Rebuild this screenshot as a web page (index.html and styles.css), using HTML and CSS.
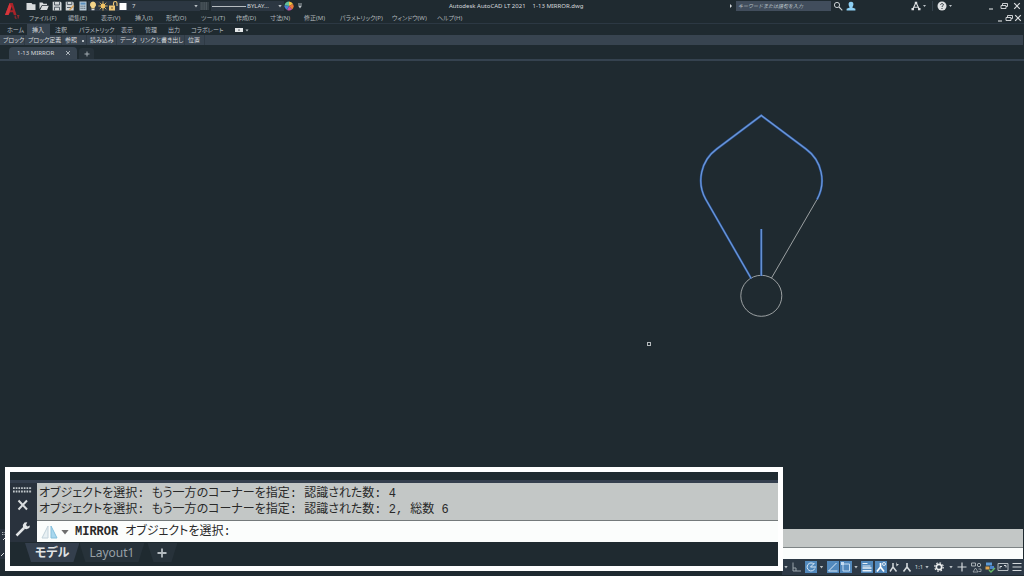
FILE: index.html
```html
<!DOCTYPE html>
<html lang="ja">
<head>
<meta charset="utf-8">
<title>Autodesk AutoCAD LT 2021 - 1-13 MIRROR.dwg</title>
<link rel="stylesheet" href="styles.css">
</head>
<body>
<div class="app">
  <header class="top">
    <button class="logo" aria-label="アプリケーション メニュー">
      <svg viewBox="0 0 16 19" width="16" height="19"><path d="M1 14 5.600 2h3.200L12.500 14H9.800l-.8-2.800H6.200L4.500 14z" fill="#a82329"/><path d="M1 14 5.600 2 7.300 6 4.500 14z" fill="#d5363b"/><path d="M6.600 9.200h2.200L7.600 5.600z" fill="#1f2a30"/><path d="M11.200 14.500v2.700h1.500M13 14.700h2.400M14.200 14.700v2.800" stroke="#c1272d" fill="none" stroke-width=".8"/></svg>
    </button>
    <div class="bars">
      <div class="titlebar">
        <div class="quick">
          <button aria-label="新規作成"><svg viewBox="0 0 10 10"><path d="M.5 2h5l1 1.200h3V9h-9z" fill="#d9dcde"/></svg></button>
          <button aria-label="開く"><svg viewBox="0 0 10 10"><path d="M.5 1.500h3l1 1.200h3.500V4H3L.5 8z" fill="#d9dcde"/><path d="M3.200 4.700h6.600L8 9H1.200z" fill="#d9dcde"/></svg></button>
          <button aria-label="上書き保存"><svg viewBox="0 0 10 10"><path d="M.7.700h7.800l1 1v7.800H.7z" fill="#d2d6d8"/><path d="M2.500 1v3h5V1M2.500 9.500V6.200h5v3.300" fill="none" stroke="#46515a" stroke-width=".9"/></svg></button>
          <button aria-label="名前を付けて保存"><svg viewBox="0 0 10 10"><path d="M.7.700h7l1 1v7.800h-8z" fill="#d2d6d8"/><path d="M2.300 1v2.600h4.500V1M2 6.500h4" fill="none" stroke="#46515a" stroke-width=".9"/><path d="m4.500 9 4.300-4.500" stroke="#d6a45e" stroke-width="1.700"/></svg></button>
          <button aria-label="印刷"><svg viewBox="0 0 10 10"><path d="M1.500.5h7v9h-7z" fill="#b8c9d6"/><path d="M2.500 1.600h5v2h-5z" fill="#5b8fbd"/><path d="M2.500 5.200h5M2.500 7.300h5" stroke="#55636e" stroke-dasharray="1.200 .6"/></svg></button>
        </div>
        <div class="layer">
          <svg viewBox="0 0 10 10"><path d="M5 .5a3.200 3.200 0 0 0-1.700 5.800v1.200h3.400V6.300A3.200 3.200 0 0 0 5 .5z" fill="#f4d488"/><path d="M3.500 8.600h3" stroke="#d9dcde" stroke-width="1.300"/></svg>
          <svg viewBox="0 0 10 10"><circle cx="5" cy="5" r="2.400" fill="#f1c364"/><path d="M5 .3v9.400M.3 5h9.400M1.700 1.700l6.600 6.600M8.300 1.700 1.700 8.300" stroke="#f1c364" stroke-width=".8"/></svg>
          <svg viewBox="0 0 10 10"><path d="M1 4.500h6v5H1z" fill="#efc774"/><path d="M5.500 4.500V2.300a1.700 1.700 0 0 1 3.500 0V5" fill="none" stroke="#efc774" stroke-width="1.100"/><path d="M4 6v2" stroke="#6b5732"/></svg>
          <svg viewBox="0 0 10 10"><path d="M1.500 2h7v7h-7z" fill="#fff"/></svg>
          <span class="layer-name">7</span>
          <i class="caret"></i>
        </div>
        <svg class="grid-icon" viewBox="0 0 9 8"><path d="M.5 1h8M.5 3h8M.5 5h8M.5 7h8" stroke="#8b959c" stroke-dasharray="1.200 .7"/></svg>
        <div class="linetype"><hr class="sample"><span>BYLAY...</span><i class="caret"></i></div>
        <svg class="wheel" viewBox="0 0 10 10"><path d="M5 5V.5A4.500 4.500 0 0 1 9 3z" fill="#efc143"/><path d="m5 5 4-2a4.500 4.500 0 0 1-1 5.500z" fill="#e9783b"/><path d="m5 5 3 3.500a4.500 4.500 0 0 1-5 .5z" fill="#c451a1"/><path d="m5 5-2 4a4.500 4.500 0 0 1-2.400-5z" fill="#477fd1"/><path d="M5 5 .6 4A4.500 4.500 0 0 1 5 .5z" fill="#62c09b"/></svg>
        <svg class="more" viewBox="0 0 4 6" width="4" height="6"><path d="M0 1h4" stroke="#b9c0c4" stroke-width=".9"/><path d="M0 2.500h4l-2 3z" fill="#b9c0c4"/></svg>
        <h1 class="title"><span>Autodesk AutoCAD LT 2021</span><span>1-13 MIRROR.dwg</span></h1>
        <i class="arrow"></i>
        <input class="search" type="text" aria-label="検索" placeholder="キーワードまたは語句を入力">
        <button class="ico" aria-label="検索を実行"><svg viewBox="0 0 10 10"><circle cx="4" cy="4" r="2.600" fill="none" stroke="#c9ced1"/><path d="m6 6 3.300 3.300" stroke="#c9ced1" stroke-width="1.200"/></svg></button>
        <button class="ico user" aria-label="サインイン"><svg viewBox="0 0 10 10"><path d="M5 .7c1.800 0 2.600 1.200 2.400 2.800C7.300 5 6.600 6 6.200 6.400l3.200 1.400v1.700H.6V7.800l3.200-1.400C3.400 6 2.700 5 2.600 3.500 2.400 1.900 3.200.7 5 .7z" fill="#8ed0f4"/></svg></button>
        <button class="ico" aria-label="アプリ ストア"><svg viewBox="0 0 10 10"><path d="M5 1.500 1.800 8M5 1.500 8.200 8M2.500 6.200h5" stroke="#dde0e2" stroke-width="1.100" fill="none"/><path d="M3.800.7h2.400V3H3.800zM.5 7h2.500v2.200H.5zM7 7h2.500v2.200H7z" fill="#dde0e2"/></svg></button>
        <i class="caret small"></i>
        <i class="rule"></i>
        <button class="ico" aria-label="ヘルプ"><svg viewBox="0 0 10 10"><circle cx="5" cy="5" r="4.500" fill="#dde0e2"/><path d="M3.600 3.800c.2-1.700 2.900-1.600 2.800 0C6.400 4.800 5 4.700 5 6M5 7v1" fill="none" stroke="#2a343b"/></svg></button>
        <i class="caret small"></i>
        <div class="win">
          <button aria-label="最小化"><svg viewBox="0 0 8 8"><path d="M2 7h4" stroke="#dde0e2" stroke-width="1.100"/></svg></button>
          <button aria-label="元に戻す"><svg viewBox="0 0 8 8"><path d="M1 3.500h5v3H1zM2.500 3.500v-2H7.500v3H6" fill="none" stroke="#dde0e2" stroke-width=".9"/></svg></button>
          <button aria-label="閉じる"><svg viewBox="0 0 8 8"><path d="m1.200 1.200 5.600 5.600M6.800 1.200 1.200 6.800" stroke="#dde0e2" stroke-width="1.200"/></svg></button>
        </div>
      </div>
      <div class="menubar">
        <nav class="menus">
          <button>ファイル(F)</button><button>編集(E)</button><button>表示(V)</button><button>挿入(I)</button><button>形式(O)</button><button>ツール(T)</button><button>作成(D)</button><button>寸法(N)</button><button>修正(M)</button><button>パラメトリック(P)</button><button>ウィンドウ(W)</button><button>ヘルプ(H)</button>
        </nav>
        <div class="win doc">
          <button aria-label="図面を最小化"><svg viewBox="0 0 8 8"><path d="M2 7h4" stroke="#dde0e2" stroke-width="1.100"/></svg></button>
          <button aria-label="図面を元に戻す"><svg viewBox="0 0 8 8"><path d="M1 3.500h5v3H1zM2.500 3.500v-2H7.500v3H6" fill="none" stroke="#dde0e2" stroke-width=".9"/></svg></button>
          <button aria-label="図面を閉じる"><svg viewBox="0 0 8 8"><path d="m1.200 1.200 5.600 5.600M6.800 1.200 1.200 6.800" stroke="#dde0e2" stroke-width="1.200"/></svg></button>
        </div>
      </div>
    </div>
  </header>
  <nav class="ribbon">
    <button>ホーム</button><button class="on">挿入</button><button>注釈</button><button>パラメトリック</button><button>表示</button><button>管理</button><button>出力</button><button>コラボレート</button>
    <button aria-label="リボン表示の切り替え"><svg viewBox="0 0 14 6" width="14" height="6"><path d="M0 1h8v4H0z" fill="#e4e7e8"/><path d="M3 3.500h2L4 2z" fill="#333d44"/><path d="M10.500 2.500h3L12 4.500z" fill="#b6bcc0"/></svg></button>
  </nav>
  <div class="panels">
    <button>ブロック</button><button>ブロック定義</button><button>参照<i class="tick"></i></button><button>読み込み</button><button>データ</button><button>リンクと書き出し</button><button>位置</button>
  </div>
  <div class="files">
    <div class="file"><span>1-13 MIRROR</span><button aria-label="タブを閉じる"><svg viewBox="0 0 6 6" width="6" height="6"><path d="m1 1 4 4M5 1 1 5" stroke="#b9c0c5" stroke-width=".9"/></svg></button></div>
    <button class="add" aria-label="新しい図面"><svg viewBox="0 0 6 6" width="6" height="6"><path d="M3 .5v5M.5 3h5" stroke="#a5adb3"/></svg></button>
  </div>
  <main class="canvas">
    <svg class="shape" viewBox="690 105 140 220" width="140" height="220" role="img" aria-label="図面">
      <g fill="none" stroke="#a9aeaf" stroke-width=".9"><path d="M817 199.500 771.500 278"/><circle cx="761.300" cy="295.800" r="20.500"/></g>
      <g fill="none" stroke="#2f5da6" stroke-width="2.200"><path d="M751.200 278.500 705.700 199.300A39 39 0 0 1 716.700 149L761.300 115.500 806 149A39 39 0 0 1 817 199.500M761.300 229v47"/></g>
      <g fill="none" stroke="#7099d8" stroke-width="1.100"><path d="M751.200 278.500 705.700 199.300A39 39 0 0 1 716.700 149L761.300 115.500 806 149A39 39 0 0 1 817 199.500M761.300 229v47"/></g>
    </svg>
    <i class="pick"></i>
  </main>
  <div class="cmd-back">
    <svg viewBox="0 0 5 30" width="5" height="30"><path d="M2 3.500h3M2 5.500h3" stroke="#aab1b5" stroke-dasharray="1 .6"/><path d="m3 11 2-2M1 27l3-3" stroke="#dde0e2"/></svg>
    <div class="back-log"></div><div class="back-line"></div>
  </div>
  <footer class="status">
    <div class="tools">
      <i class="caret"></i>
      <button aria-label="直交モード"><svg viewBox="0 0 12 12"><path d="M2 1.500V10h8M2 7h3v3" fill="none" stroke="#9aa4ab"/></svg></button>
      <button class="on" aria-label="極トラッキング"><svg viewBox="0 0 12 12"><path d="M9 3.200A4 4 0 1 0 9.800 7.500M5.500 6H11M5.500 6l4-4" fill="none" stroke="#d7e7f6"/></svg></button>
      <i class="caret"></i>
      <button class="on" aria-label="オブジェクト スナップ トラッキング"><svg viewBox="0 0 12 12"><path d="M1.500 10h9M1.500 10l8-8" fill="none" stroke="#d7e7f6"/></svg></button>
      <button class="on" aria-label="オブジェクト スナップ"><svg viewBox="0 0 12 12"><path d="M3 3h6.500v7H3z" fill="none" stroke="#c3dbf1"/><path d="M1 1h3v3H1z" fill="#c3dbf1"/></svg></button>
      <i class="caret"></i>
      <button class="on" aria-label="線の太さ"><svg viewBox="0 0 12 12"><path d="M1.500 2.500h5M1.500 5h8" stroke="#e8f1f9"/><path d="M1.500 7h9M1.500 9.700h9" stroke="#e8f1f9" stroke-width="1.500"/></svg></button>
      <button class="on" aria-label="注釈の表示"><svg viewBox="0 0 12 12"><path d="m5.500 2v4L2 10.500M5.500 6 9 10.500" fill="none" stroke="#fff" stroke-width="1.700"/><circle cx="9" cy="3" r="1.500" fill="none" stroke="#fff" stroke-width=".8"/></svg></button>
      <button aria-label="自動尺度"><svg viewBox="0 0 12 12"><path d="m5 2v4L2 10.500M5 6l3.500 4.500" fill="none" stroke="#d4d9dc" stroke-width="1.500"/><path d="m8 1 1 2h2L8.500 5.500z" fill="#d4d9dc"/></svg></button>
      <button aria-label="注釈"><svg viewBox="0 0 12 12"><path d="m6 2v4L2.500 10.500M6 6l3.500 4.500" fill="none" stroke="#d4d9dc" stroke-width="1.600"/></svg></button>
      <button class="scale">1:1</button>
      <i class="caret"></i>
      <button aria-label="ワークスペース"><svg viewBox="0 0 12 12"><circle cx="6" cy="6" r="2.700" fill="none" stroke="#eceeef" stroke-width="1.700"/><circle cx="6" cy="6" r="4.200" fill="none" stroke="#eceeef" stroke-width="1.200" stroke-dasharray="1.600 1.700"/></svg></button>
      <i class="caret"></i>
      <button aria-label="注釈モニター"><svg viewBox="0 0 12 12"><path d="M6 1.500v9M1.500 6h9" stroke="#d4d9dc" stroke-width="1.200"/></svg></button>
      <button aria-label="選択表示"><svg viewBox="0 0 12 12"><path d="M1.500 2h4v3h-4z" fill="none" stroke="#a9b1b6"/><circle cx="9" cy="4" r="1.700" fill="none" stroke="#a9b1b6"/><path d="m5.500 7 2.500 4H3zM8.500 8h2.500v2.500H8.500" fill="none" stroke="#a9b1b6" stroke-width=".8"/></svg></button>
      <button aria-label="パフォーマンス"><svg viewBox="0 0 12 12"><path d="M2 1.500h6v3H2z" fill="#5d9bd8"/><path d="M1.500 5.500h4v3h-4z" fill="#dca452"/><path d="M6 5h4v3H6z" fill="#4a83c8"/><path d="m5 9 2 2 4-4" fill="none" stroke="#68b866" stroke-width="1.400"/></svg></button>
      <button aria-label="フルスクリーン"><svg viewBox="0 0 12 12"><path d="M1 2.500h10v7H1z" fill="none" stroke="#b6bdc2"/><path d="M3 7.500v-2h2M7 4.500h2v2" fill="none" stroke="#d4d9dc"/></svg></button>
      <button aria-label="カスタマイズ"><svg viewBox="0 0 12 12"><path d="M1.500 2.500h9M1.500 6h9M1.500 9.500h9" stroke="#d4d9dc" stroke-width="1.200"/></svg></button>
    </div>
  </footer>
  <section class="callout" aria-label="コマンド ライン">
    <div class="edge"></div>
    <div class="command">
      <div class="grip">
        <svg viewBox="0 0 19 6" width="19" height="6"><path d="M0 1.200h19M0 4.500h19" stroke="#c3c9cd" stroke-width="1.800" stroke-dasharray="1.700 1"/></svg>
        <button aria-label="閉じる"><svg viewBox="0 0 12 12" width="12" height="12"><path d="m1.500 1.500 8.500 9M10 1.500l-8.500 9" stroke="#d9dddf" stroke-width="2"/></svg></button>
        <button class="wrench" aria-label="カスタマイズ"><svg viewBox="0 0 16 16" width="16" height="16"><path d="M1.500 14.500 9 7" stroke="#e2e5e7" stroke-width="2.500"/><path d="M15 4.500 12.500 5.500 11 4 12.300 1.300 9.500 1.500 7.800 4 8.200 7.600 11.500 8.300 14.300 7z" fill="#e2e5e7"/></svg></button>
      </div>
      <div class="console">
        <div class="log"><p>オブジェクトを選択: もう一方のコーナーを指定: 認識された数: 4</p><p>オブジェクトを選択: もう一方のコーナーを指定: 認識された数: 2, 総数 6</p></div>
        <div class="prompt">
          <svg viewBox="0 0 17 14" width="17" height="14"><path d="M7 1v12H1z" fill="#e8f0f3" stroke="#c2d2da"/><path d="M10 1v12h6z" fill="#a8d7ee" stroke="#82bfdc"/></svg>
          <i class="caret big"></i>
          <b>MIRROR</b><span>オブジェクトを選択:</span>
        </div>
      </div>
    </div>
    <nav class="layouts"><button class="on">モデル</button><button>Layout1</button><button class="plus" aria-label="レイアウトを追加"><svg viewBox="0 0 10 10" width="10" height="10"><path d="M5 .5v9M.5 5h9" stroke="#b4bbc0" stroke-width="1.800"/></svg></button></nav>
  </section>
</div>
</body>
</html>
```
FILE: styles.css
```css
* { box-sizing: border-box; }
body { margin: 0; background: #1f2a30; color: #b4bbc0; font: 6px/10px "Noto Sans", "Noto Sans CJK JP", sans-serif; font-feature-settings: "palt"; overflow: hidden; }
button { display: flex; align-items: center; justify-content: center; margin: 0; padding: 0; border: 0; background: none; color: inherit; font: inherit; font-feature-settings: inherit; white-space: nowrap; }
svg { display: block; flex: none; }
p, h1 { margin: 0; font-weight: 400; }
.app { position: relative; display: flex; flex-direction: column; height: 100vh; }

.caret { flex: none; width: 4px; height: 3px; background: #b9c0c4; clip-path: polygon(0 0, 100% 0, 50% 100%); }
.caret.small { width: 3px; height: 2px; }
.caret.big { width: 8px; height: 5px; background: #6e6e6e; }

.top { display: flex; height: 24px; border-bottom: 1px solid #2c3843; }
.logo { width: 26px; flex: none; align-items: flex-start; padding: 1px 3px 0 0; }
.bars { flex: 1; min-width: 0; }
.titlebar { display: flex; align-items: center; height: 12px; }
.quick { display: flex; gap: 3px; }
.quick svg, .layer svg, .ico svg, .wheel { width: 10px; height: 10px; }
.layer { display: flex; align-items: center; width: 112px; height: 10px; background: #2c3742; }
.layer .caret { margin: 0 2px 0 auto; }
.layer-name { margin-left: 4px; color: #d5d9dc; }
.grid-icon { width: 9px; height: 8px; margin: 0 2px 0 0; }
.linetype { display: flex; align-items: center; gap: 1px; width: 73px; height: 10px; padding: 0 2px 0 1px; background: #2c3742; color: #d5d9dc; }
.linetype .caret { margin-left: auto; }
.sample { flex: none; width: 34px; margin: 0; border: 0; border-top: 1px solid #b6bcc0; }
.wheel { margin: 0 4px 0 0; }
.title { flex: 1; display: flex; gap: 7px; padding-left: 147px; color: #d5d9dc; font-size: 6px; line-height: 10px; white-space: nowrap; }
.arrow { width: 2px; height: 4px; margin-right: 4px; background: #d5d9dc; clip-path: polygon(0 0, 100% 50%, 0 100%); }
.search { width: 95px; height: 10px; padding: 0 2px; border: 0; background: #414d5c; color: #d5d9dc; font: italic 5px/10px "Noto Sans", "Noto Sans CJK JP", sans-serif; }
.search::placeholder { color: #bcc3c8; }
.ico { margin-left: 2px; }
.user { margin: 0 53px 0 3px; }
.rule { width: 1px; height: 10px; margin: 0 2px 0 6px; background: #35414b; }
.ico + .small { margin-left: 2px; }
.win { display: flex; gap: 5px; margin: 0 3px 0 35px; }
.win svg { width: 8px; height: 8px; }
.win.doc { gap: 1px; margin: 0 2px 0 auto; }
.menubar { display: flex; align-items: center; height: 12px; color: #b0b7bb; }
.menus { display: grid; grid-template-columns: 39px 33px 34px 31px 35px 35px 34px 34px 36px 52px 45px 30px; padding-left: 3px; }
.menus button { justify-content: flex-start; }

.ribbon { display: grid; grid-template-columns: 25px 23px 24px 42px 24px 23px 23px 44px 24px; height: 11px; padding-left: 2px; }
.ribbon button { justify-content: flex-start; padding-left: 5px; }
.ribbon .on { background: #384450; color: #d5d9dc; }
.panels { display: grid; grid-template-columns: 25px 37px 25px 30px 20px 48px 20px; height: 10px; margin-right: 1px; background: #384450; color: #d5d9dc; }
.panels button { justify-content: flex-start; padding-left: 3px; border-right: 1px solid #2f3a45; }
.tick { width: 2px; height: 2px; margin: 1px 0 0 5px; background: #b4bbc0; }
.files { display: flex; align-items: flex-end; height: 16px; border-bottom: 2px solid #35424f; }
.file { display: flex; align-items: center; gap: 11px; height: 12px; margin-left: 9px; padding: 0 6px 0 8px; background: #384450; border-radius: 4px 4px 0 0; color: #d5d9dc; }
.add { width: 15px; height: 11px; margin-left: 2px; border-radius: 3px 3px 0 0; background: #27323a; }

.canvas { position: relative; flex: 1; min-height: 0; }
.shape { position: absolute; top: 44px; right: 194px; }
.pick { position: absolute; top: 281px; right: 373px; width: 4px; height: 4px; border: 1px solid #b5babc; }

.cmd-back { display: grid; grid-template: 19px 11px / 6px 1fr; margin-right: 1px; background: #29323d; }
.cmd-back svg { grid-row: 1 / 3; }
.back-log { background: #c3c7c6; border-bottom: 1px solid #7e8485; }
.back-line { background: #fbfdfc; }
.status { display: flex; justify-content: flex-end; height: 17px; }
.tools { display: grid; grid-template-columns: 8px 14px 13px 9px 13px 13px 8px 14px 14px 12px 13px 12px 4px 19px 6px 15px 14px 13px 14px 13px; align-items: center; justify-items: center; width: 242px; height: 16px; background: #2d3946; }
.tools button, .tools svg { width: 12px; height: 12px; }
.tools .on { background: #5289bd; }
.tools .scale { color: #d4d9dc; }

.callout { position: absolute; left: 5px; right: 241px; bottom: 5px; border: 5px solid #fff; background: #1f2a30; }
.edge { height: 11px; border-bottom: 3px solid #343f4e; }
.command { display: flex; background: #29323d; }
.grip { display: flex; flex-direction: column; align-items: center; width: 27px; padding: 4px 2px 0 0; gap: 6px; }
.wrench { margin-top: 4px; }
.console { flex: 1; min-width: 0; color: #292929; font: 12px/16px "Liberation Mono", "Noto Sans CJK JP", monospace; font-feature-settings: "palt"; white-space: nowrap; }
.log { height: 38px; padding: 3px 2px 0; background: #c3c7c6; border-bottom: 1px solid #747a7b; }
.prompt { display: flex; align-items: center; height: 21px; padding: 1px 0 0 4px; background: #fbfdfc; }
.prompt .caret { margin: 0 6px 0 3px; }
.prompt b { margin-right: 7px; }
.layouts { display: flex; height: 24px; padding: 1px 0 4px 15px; color: #98a0a6; font-size: 12px; line-height: 18px; }
.layouts button { padding: 0 10px; background: #27323a; clip-path: polygon(0 0, 100% 0, calc(100% - 6px) 100%, 6px 100%); }
.layouts .on { background: #343f4d; color: #e0e3e5; font-weight: 600; }
.layouts .plus { margin-left: 3px; }
```
